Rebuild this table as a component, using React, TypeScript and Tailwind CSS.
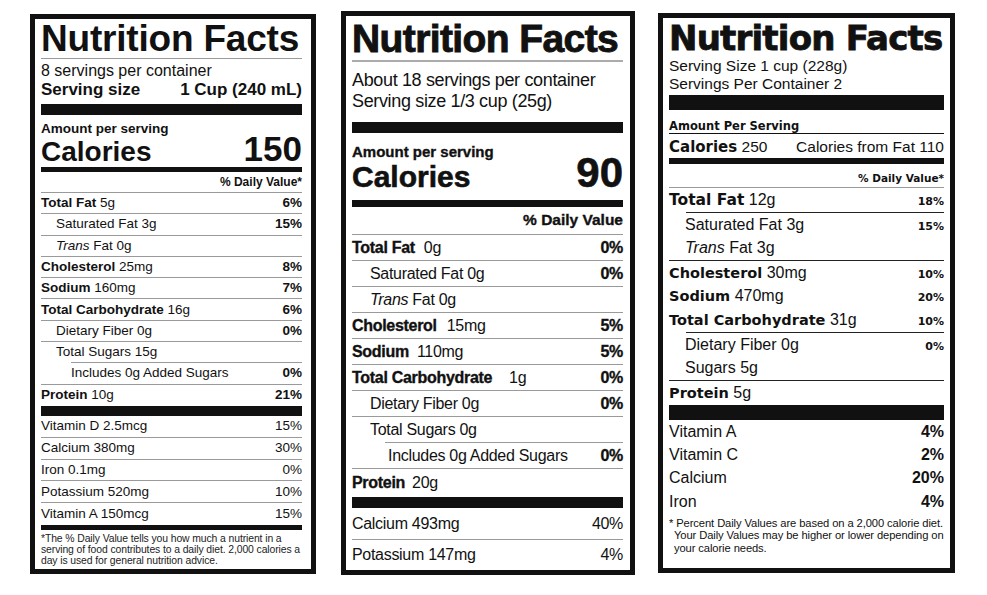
import React from "react";

interface RowProps {
  h: string;
  left: React.ReactNode;
  right?: React.ReactNode;
  line?: string;
}

const Row: React.FC<RowProps> = ({ h, left, right, line }) => (
  <div className={`flex flex-col ${h}`}>
    <div className="flex flex-1 items-center justify-between whitespace-nowrap">
      <span>{left}</span>
      <span>{right}</span>
    </div>
    {line && <div className={line} />}
  </div>
);

const dejavu = "font-['DejaVu_Sans',sans-serif] font-bold";

const LabelOne = () => {
  const gray = "h-px bg-[#9a9a9a]";
  const rows: RowProps[] = [
    { h: "h-[21.3px]", left: <><b>Total Fat</b> 5g</>, right: <b>6%</b>, line: gray },
    { h: "h-[21.3px]", left: <span className="pl-[15px]">Saturated Fat 3g</span>, right: <b>15%</b>, line: gray },
    { h: "h-[21.3px]", left: <span className="pl-[15px]"><i>Trans</i> Fat 0g</span>, line: gray },
    { h: "h-[21.3px]", left: <><b>Cholesterol</b> 25mg</>, right: <b>8%</b>, line: gray },
    { h: "h-[21.3px]", left: <><b>Sodium</b> 160mg</>, right: <b>7%</b>, line: gray },
    { h: "h-[21.3px]", left: <><b>Total Carbohydrate</b> 16g</>, right: <b>6%</b>, line: gray },
    { h: "h-[21.3px]", left: <span className="pl-[15px]">Dietary Fiber 0g</span>, right: <b>0%</b>, line: gray },
    { h: "h-[21.3px]", left: <span className="pl-[15px]">Total Sugars 15g</span>, line: `${gray} ml-[30px]` },
    { h: "h-[21.3px]", left: <span className="pl-[30px]">Includes 0g Added Sugars</span>, right: <b>0%</b>, line: gray },
    { h: "h-[21.3px]", left: <><b>Protein</b> 10g</>, right: <b>21%</b> },
  ];
  const vitamins: [string, string][] = [
    ["Vitamin D 2.5mcg", "15%"],
    ["Calcium 380mg", "30%"],
    ["Iron 0.1mg", "0%"],
    ["Potassium 520mg", "10%"],
    ["Vitamin A 150mcg", "15%"],
  ];
  return (
    <div className="mt-[14px] h-[560px] w-[286px] shrink-0 border-[5px] border-[#111] bg-white pl-[6px] pr-[9px] text-[#111]">
      <div className="whitespace-nowrap border-b border-[#9a9a9a] pt-[1px] text-[37px] font-bold leading-[38px] tracking-[-0.2px]">Nutrition Facts</div>
      <div className="mt-[3px] text-[16px] leading-[18px]">8 servings per container</div>
      <div className="flex justify-between text-[17px] font-bold leading-[19px]">
        <span>Serving size</span>
        <span>1 Cup (240 mL)</span>
      </div>
      <div className="mt-[5px] h-[11px] bg-[#111]" />
      <div className="mt-[6px] text-[13.5px] font-bold leading-[15px]">Amount per serving</div>
      <div className="flex items-baseline justify-between font-bold leading-[26px]">
        <span className="text-[28px]">Calories</span>
        <span className="text-[35px]">150</span>
      </div>
      <div className="mt-[2px] h-[5px] bg-[#111]" />
      <div className="h-[21px] border-b border-[#9a9a9a] pt-[3px] text-right text-[12px] font-bold leading-[14px]">% Daily Value*</div>
      <div className="text-[13.5px]">
        {rows.map((r, i) => (
          <Row key={i} {...r} />
        ))}
      </div>
      <div className="h-[10px] bg-[#111]" />
      <div className="text-[13.5px]">
        {vitamins.map(([l, v], i) => (
          <Row key={l} h="h-[21.8px]" left={l} right={v} line={i < 4 ? gray : undefined} />
        ))}
      </div>
      <div className="h-[5px] bg-[#111]" />
      <div className="whitespace-nowrap pt-[3px] text-[10.4px] leading-[11px] tracking-[-0.1px] text-[#222]">
        *The % Daily Value tells you how much a nutrient in a
        <br />
        serving of food contributes to a daily diet. 2,000 calories a
        <br />
        day is used for general nutrition advice.
      </div>
    </div>
  );
};

const LabelTwo = () => {
  const gray = "h-px bg-[#9a9a9a]";
  const heavy = "font-bold [-webkit-text-stroke:0.35px_#111]";
  const rows: RowProps[] = [
    { h: "h-[26px]", left: <><b className={heavy}>Total Fat</b><span className="ml-[9px]">0g</span></>, right: <b className={heavy}>0%</b>, line: gray },
    { h: "h-[26px]", left: <span className="pl-[18px]">Saturated Fat 0g</span>, right: <b className={heavy}>0%</b>, line: gray },
    { h: "h-[26px]", left: <span className="pl-[18px]"><i>Trans</i> Fat 0g</span>, line: gray },
    { h: "h-[26px]", left: <><b className={heavy}>Cholesterol</b><span className="ml-[10px]">15mg</span></>, right: <b className={heavy}>5%</b>, line: gray },
    { h: "h-[26px]", left: <><b className={heavy}>Sodium</b><span className="ml-[8px]">110mg</span></>, right: <b className={heavy}>5%</b>, line: gray },
    { h: "h-[26px]", left: <><b className={heavy}>Total Carbohydrate</b><span className="ml-[17px]">1g</span></>, right: <b className={heavy}>0%</b>, line: gray },
    { h: "h-[26px]", left: <span className="pl-[18px]">Dietary Fiber 0g</span>, right: <b className={heavy}>0%</b>, line: gray },
    { h: "h-[26px]", left: <span className="pl-[18px]">Total Sugars 0g</span>, line: `${gray} ml-[33px]` },
    { h: "h-[26px]", left: <span className="pl-[36px]">Includes 0g Added Sugars</span>, right: <b className={heavy}>0%</b>, line: gray },
    { h: "h-[28px]", left: <><b className={heavy}>Protein</b><span className="ml-[7px]">20g</span></> },
  ];
  return (
    <div className="mt-[11px] h-[564px] w-[294px] shrink-0 border-[5px] border-[#111] bg-white pl-[6px] pr-[7px] text-[#111]">
      <div className="whitespace-nowrap border-b-2 border-[#ababab] pb-[1px] pt-[3px] text-[39px] font-bold leading-[40px] tracking-[-0.6px] [-webkit-text-stroke:0.9px_#111]">
        Nutrition Facts
      </div>
      <div className="mt-[8px] text-[18px] leading-[21px] tracking-[-0.35px]">About 18 servings per container</div>
      <div className="text-[18px] leading-[21px] tracking-[-0.35px]">Serving size 1/3 cup (25g)</div>
      <div className="mt-[10px] h-[11px] bg-[#111]" />
      <div className={`mt-[10px] text-[15px] leading-[17px] ${heavy}`}>Amount per serving</div>
      <div className="flex items-baseline justify-between font-bold leading-[26px] [-webkit-text-stroke:0.6px_#111]">
        <span className="text-[30px]">Calories</span>
        <span className="text-[42px]">90</span>
      </div>
      <div className="mt-[10px] h-[7px] bg-[#111]" />
      <div className={`h-[28px] border-b border-[#9a9a9a] pt-[4px] text-right text-[15.5px] leading-[18px] ${heavy}`}>% Daily Value</div>
      <div className="text-[16px] tracking-[-0.3px]">
        {rows.map((r, i) => (
          <Row key={i} {...r} />
        ))}
      </div>
      <div className="h-[11px] bg-[#111]" />
      <div className="text-[16px] tracking-[-0.3px]">
        <Row h="h-[32px]" left="Calcium 493mg" right="40%" line={gray} />
        <Row h="h-[30px]" left="Potassium 147mg" right="4%" />
      </div>
    </div>
  );
};

const LabelThree = () => {
  const dark = "h-[1.5px] bg-[#222]";
  const mid = "h-[1.5px] bg-[#666]";
  const pct = `${dejavu} text-[11px]`;
  const rows: RowProps[] = [
    { h: "h-[25px]", left: <><b className={`${dejavu} text-[15.5px]`}>Total Fat</b> 12g</>, right: <span className={pct}>18%</span>, line: `${dark} ml-[17px]` },
    { h: "h-[23px]", left: <span className="pl-[16px]">Saturated Fat 3g</span>, right: <span className={pct}>15%</span>, line: `${dark} ml-[17px]` },
    { h: "h-[25px]", left: <span className="pl-[16px]"><i>Trans</i> Fat 3g</span>, line: dark },
    { h: "h-[23px]", left: <><b className={`${dejavu} text-[14.5px]`}>Cholesterol</b> 30mg</>, right: <span className={pct}>10%</span>, line: dark },
    { h: "h-[24px]", left: <><b className={`${dejavu} text-[14.5px]`}>Sodium</b> 470mg</>, right: <span className={pct}>20%</span>, line: mid },
    { h: "h-[25px]", left: <><b className={`${dejavu} text-[14.5px]`}>Total Carbohydrate</b> 31g</>, right: <span className={pct}>10%</span>, line: `${dark} ml-[17px]` },
    { h: "h-[23px]", left: <span className="pl-[16px]">Dietary Fiber 0g</span>, right: <span className={pct}>0%</span>, line: `${dark} ml-[17px]` },
    { h: "h-[25px]", left: <span className="pl-[16px]">Sugars 5g</span>, line: dark },
    { h: "h-[24px]", left: <><b className={`${dejavu} text-[14.5px]`}>Protein</b> 5g</> },
  ];
  const vitamins: [string, string, string, string][] = [
    ["Vitamin A", "4%", "h-[23px]", dark],
    ["Vitamin C", "2%", "h-[23px]", dark],
    ["Calcium", "20%", "h-[24px]", "h-px bg-[#9a9a9a]"],
    ["Iron", "4%", "h-[23px]", mid],
  ];
  return (
    <div className="mt-[13px] h-[560px] w-[297px] shrink-0 border-[5px] border-[#111] bg-white px-[6px] text-[#111]">
      <div className={`${dejavu} whitespace-nowrap pt-[3px] text-[34px] leading-[34px] tracking-[-0.8px] [-webkit-text-stroke:0.8px_#111]`}>Nutrition Facts</div>
      <div className="mt-[2px] text-[15.5px] leading-[18px]">Serving Size 1 cup (228g)</div>
      <div className="text-[15.5px] leading-[18px]">Servings Per Container 2</div>
      <div className="mt-[2px] h-[15px] bg-[#111]" />
      <div className={`${dejavu} mt-[9.5px] border-b-[1.5px] border-[#111] text-[11.5px] leading-[13px]`}>Amount Per Serving</div>
      <div className="mt-[4.5px] flex items-baseline justify-between text-[15.5px] leading-[18px]">
        <span>
          <b className={`${dejavu} text-[15px]`}>Calories</b> 250
        </span>
        <span>Calories from Fat 110</span>
      </div>
      <div className="mt-[1.5px] h-[6px] bg-[#111]" />
      <div className={`${dejavu} h-[24px] border-b border-[#9a9a9a] pt-[8.5px] text-right text-[10.5px] leading-[12px]`}>% Daily Value*</div>
      <div className="text-[16px]">
        {rows.map((r, i) => (
          <Row key={i} {...r} />
        ))}
      </div>
      <div className="h-[15px] bg-[#111]" />
      <div className="text-[16px]">
        {vitamins.map(([l, v, h, line]) => (
          <Row key={l} h={h} left={l} right={<b>{v}</b>} line={line} />
        ))}
      </div>
      <div className="whitespace-nowrap pt-[4px] text-[11.2px] leading-[12.5px] tracking-[-0.1px] text-[#111]">
        * Percent Daily Values are based on a 2,000 calorie diet.
        <br />
        <span className="pl-[5px]">Your Daily Values may be higher or lower depending on</span>
        <br />
        <span className="pl-[5px]">your calorie needs.</span>
      </div>
    </div>
  );
};

export default function App() {
  return (
    <div className="flex h-[595px] w-[987px] items-start gap-[25px] bg-white pl-[30px] font-['Liberation_Sans',Arial,sans-serif]">
      <LabelOne />
      <LabelTwo />
      <div className="-ml-[2px]">
        <LabelThree />
      </div>
    </div>
  );
}
